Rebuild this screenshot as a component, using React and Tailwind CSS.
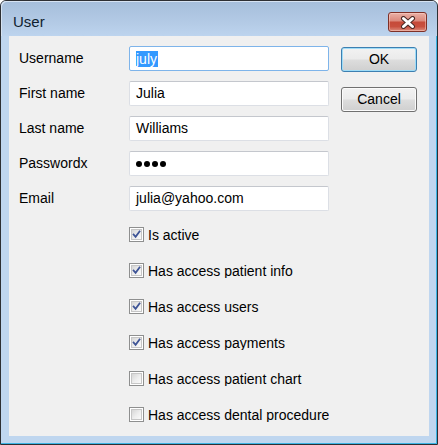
import React from "react";

function TextBox({ children, focused }) {
  return (
    <div
      className={
        "w-[200px] h-[25px] rounded-[2px] bg-white border flex items-center pl-[6px] text-[14px] text-black overflow-hidden " +
        (focused
          ? "border-[#7eb4ea]"
          : "border-[#dcdfe5] border-t-[#c4c7cd]")
      }
    >
      {children}
    </div>
  );
}

function Checkbox({ checked, label }) {
  return (
    <div className="flex items-center h-[15px] w-[200px] overflow-hidden whitespace-nowrap">
      <div className="w-[15px] h-[15px] shrink-0 border border-[#8e8f8f] bg-white p-[1px]">
        <div className="w-full h-full border border-[#c6c6c6] bg-[linear-gradient(135deg,#d6d6d6_0%,#eeeeee_55%,#fafafa_100%)] relative">
          {checked && (
            <svg viewBox="0 0 11 11" className="absolute inset-0 w-full h-full">
              <path
                d="M2 5.6 L4.4 8.4 L9.2 1.8"
                fill="none"
                stroke="#3e5496"
                strokeWidth="2.2"
                strokeLinecap="square"
                strokeLinejoin="miter"
              />
            </svg>
          )}
        </div>
      </div>
      <span className="ml-[4px] text-[14px] text-black leading-none">{label}</span>
    </div>
  );
}

function Button({ children, isDefault }) {
  return (
    <div
      className={
        "w-[76px] h-[25px] rounded-[3px] border flex items-center justify-center text-[14px] text-black bg-[linear-gradient(to_bottom,#f2f2f2_0%,#ebebeb_48%,#dddddd_52%,#cfcfcf_100%)] " +
        (isDefault
          ? "border-[#3c7fb1] shadow-[inset_0_0_0_1px_#9fdcf7]"
          : "border-[#707070] shadow-[inset_0_0_0_1px_#fbfbfb]")
      }
    >
      {children}
    </div>
  );
}

const rows = [
  ["Username", "july", true],
  ["First name", "Julia"],
  ["Last name", "Williams"],
  ["Passwordx", null],
  ["Email", "julia@yahoo.com"],
];

const checks = [
  ["Is active", true],
  ["Has access patient info", true],
  ["Has access users", true],
  ["Has access payments", true],
  ["Has access patient chart", false],
  ["Has access dental procedure", false],
];

export default function App() {
  return (
    <div
      className="w-[438px] h-[445px] border border-[#2d2f33] rounded-t-[6px] bg-[#bfd6ef] shadow-[inset_-1px_-1px_0_#3cb4e4] flex flex-col overflow-hidden"
      style={{ fontFamily: '"Liberation Sans", Arial, sans-serif' }}
    >
      <div className="h-[35px] shrink-0 flex items-start justify-between bg-[linear-gradient(to_bottom,#a5bedb_0%,#b3cae5_60%,#bdd4ee_100%)] rounded-t-[5px] shadow-[inset_1px_1px_0_#d6e3f2]">
        <span className="pl-[12px] pt-[12px] text-[15px] leading-[18px] text-[#0f1e30]">User</span>
        <div className="mt-[11px] mr-[10px] w-[39px] h-[20px] rounded-[3px] border border-[#7e3027] bg-[linear-gradient(to_bottom,#eab0a6_0%,#dc8a7d_42%,#c64a39_52%,#c84f3e_75%,#dc8c7d_100%)] shadow-[inset_0_0_0_1px_rgba(255,220,210,0.45)] flex items-center justify-center">
          <svg width="16" height="13" viewBox="0 0 16 13">
            <path d="M3.5 2.5 L12.5 10.5 M12.5 2.5 L3.5 10.5" stroke="#4a2a26" strokeWidth="5" strokeLinecap="round" />
            <path d="M3.5 2.5 L12.5 10.5 M12.5 2.5 L3.5 10.5" stroke="#ffffff" strokeWidth="3" strokeLinecap="round" />
          </svg>
        </div>
      </div>
      <div className="ml-[8px] w-[420px] h-[400px] bg-[#f0f0f0] flex pl-[10px] pt-[10px]">
        <div className="flex flex-col w-[310px]">
          <div className="flex flex-col gap-[10px]">
            {rows.map(([label, value, focused]) => (
              <div key={label} className="flex items-center h-[25px]">
                <span className="w-[110px] text-[14px] text-black">{label}</span>
                <TextBox focused={focused}>
                  {label === "Username" ? (
                    <span className="bg-[#3399ff] text-white leading-[16px] pr-[1px]">{value}</span>
                  ) : value === null ? (
                    <span className="flex gap-[2px] items-center" aria-label="password">
                      <span className="w-[6px] h-[6px] rounded-full bg-black" />
                      <span className="w-[6px] h-[6px] rounded-full bg-black" />
                      <span className="w-[6px] h-[6px] rounded-full bg-black" />
                      <span className="w-[6px] h-[6px] rounded-full bg-black" />
                    </span>
                  ) : (
                    value
                  )}
                </TextBox>
              </div>
            ))}
          </div>
          <div className="flex flex-col gap-[21px] mt-[16px] ml-[110px]">
            {checks.map(([label, checked]) => (
              <Checkbox key={label} label={label} checked={checked} />
            ))}
          </div>
        </div>
        <div className="flex flex-col gap-[15px] ml-[12px] pt-[1px]">
          <Button isDefault>OK</Button>
          <Button>Cancel</Button>
        </div>
      </div>
    </div>
  );
}
